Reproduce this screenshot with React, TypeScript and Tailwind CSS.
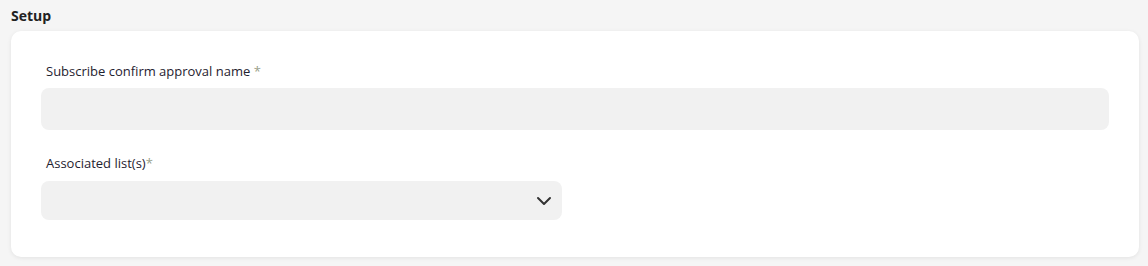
import { ChevronDown } from "lucide-react";

export default function App() {
    return (
        <div className="min-h-[266px] w-full bg-[#f5f5f5] px-[11px] pt-[6px] font-['Open_Sans',sans-serif] text-[#1f2230]">
            <h2 className="text-[14px] font-bold leading-[19px] text-[#222]">Setup</h2>
            <div className="mt-[6px] w-[1128px] rounded-[10px] bg-white px-[30px] pt-[31px] pb-[37px] shadow-[0_1px_4px_rgba(0,0,0,0.08)]">
                <label className="block pl-[5px] text-[13px] font-medium leading-[18px]">
                    Subscribe confirm approval name <span className="text-[#9aa08a]">*</span>
                </label>
                <div className="mt-[8px] h-[42px] w-full rounded-[8px] bg-[#f1f1f1]" />

                <label className="mt-[24px] block pl-[5px] text-[13px] font-medium leading-[18px]">
                    Associated list(s)<span className="text-[#9aa08a]">*</span>
                </label>
                <div className="mt-[9px] flex h-[39px] w-[521px] items-center justify-end rounded-[8px] bg-[#f1f1f1] pr-[6px]">
                    <ChevronDown className="h-[24px] w-[24px] text-[#333]" strokeWidth={2} />
                </div>
            </div>
        </div>
    );
}
